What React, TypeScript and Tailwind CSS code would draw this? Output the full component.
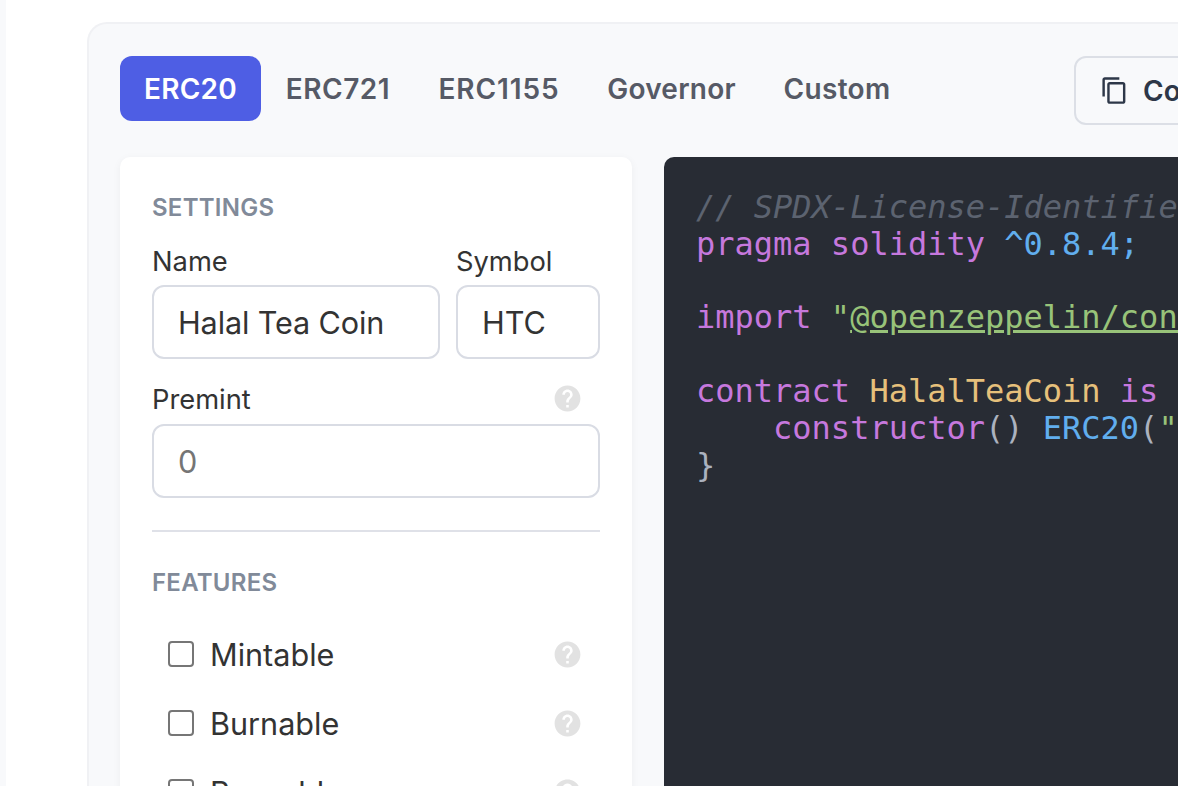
import React from "react";

const HELP = "M12 2C6.48 2 2 6.48 2 12s4.48 10 10 10 10-4.48 10-10S17.52 2 12 2zm1 17h-2v-2h2v2zm2.07-7.75l-.9.92C13.45 12.9 13 13.5 13 15h-2v-.5c0-1.1.45-2.1 1.17-2.83l1.24-1.26c.37-.36.59-.86.59-1.41 0-1.1-.9-2-2-2s-2 .9-2 2H8c0-2.21 1.79-4 4-4s4 1.79 4 4c0 .88-.36 1.68-.93 2.25z";
const COPY = "M16 1H4c-1.1 0-2 .9-2 2v14h2V3h12V1zm3 4H8c-1.1 0-2 .9-2 2v14c0 1.1.9 2 2 2h11c1.1 0 2-.9 2-2V7c0-1.1-.9-2-2-2zm0 16H8V7h11v14z";

function Help({ className = "" }: { className?: string }) {
  return (
    <svg viewBox="0 0 24 24" className={`mr-[0.75px] h-[31px] w-[31px] shrink-0 fill-[#e2e2e2] ${className}`}>
      <path d={HELP} />
    </svg>
  );
}

function Feature({ label }: { label: string }) {
  return (
    <div className="flex h-[69px] items-center pl-4 pr-4">
      <input
        type="checkbox"
        readOnly
        className="mb-[2px] h-[26px] w-[26px] shrink-0 appearance-none rounded-[4px] border-2 border-[#767676] bg-white"
      />
      <span className="ml-4 flex-1 text-[30.6px] leading-[40px] text-[#333333]">{label}</span>
      <Help />
    </div>
  );
}

const inputCls =
  "block h-[74px] w-full rounded-[12px] border-2 border-[#d9dce4] bg-white px-6 text-[30.6px] text-[#333333] placeholder:text-[#757575] outline-none";

const labelCls = "text-[27.3px] leading-[42px] text-[#333333]";
const headCls = "text-[24px] font-semibold leading-[36px] tracking-[0.25px] text-[#818a99]";

const tabs: [string, string][] = [
  ["ERC721", "w-[154px] tracking-[0.5px]"],
  ["ERC1155", "w-[168px] tracking-[0.9px]"],
  ["Governor", "w-[177px] tracking-[0.25px]"],
  ["Custom", "w-[154px] tracking-[0.35px]"],
];

export default function App() {
  return (
    <div className="flex h-[786px] w-[1178px] overflow-hidden bg-white font-['Inter',sans-serif]">
      <div className="h-full w-[6px] shrink-0 bg-[#f8f9fb]" />
      <div className="ml-[81px] mt-[22px] w-[1200px] shrink-0 rounded-t-[20px] border-2 border-b-0 border-[#f0f1f4] bg-[#f8f9fb] pl-[31px] pt-[32px]">
        <div className="flex h-[69px] items-start">
          <div className="flex h-[65px] w-[141px] shrink-0 items-center justify-center rounded-[12px] bg-[#4e5ee4] text-[28px] font-semibold tracking-[0.25px] text-white">
            ERC20
          </div>
          {tabs.map(([t, w]) => (
            <div key={t} className={`flex h-[65px] shrink-0 ${w} items-center justify-center text-[28px] font-semibold text-[#565a66]`}>
              {t}
            </div>
          ))}
          <div className="ml-[160px] flex h-[69px] shrink-0 items-center rounded-[12px] border-2 border-[#dcdfe6] pl-[24px] pr-6">
            <svg viewBox="0 0 24 24" className="h-[29px] w-[29px] shrink-0 fill-[#2d3748]">
              <path d={COPY} />
            </svg>
            <span className="ml-[14px] whitespace-nowrap text-[28px] font-semibold text-[#2d3748]">Copy to Clipboard</span>
          </div>
        </div>
        <div className="mt-8 flex items-start gap-8">
          <div className="h-[700px] w-[512px] shrink-0 rounded-[10px] bg-white px-8 pt-[33px] shadow-[0_2px_8px_rgba(0,0,0,0.05)]">
            <div className={headCls}>SETTINGS</div>
            <div className="mt-[15px] flex gap-4">
              <label className="block w-[288px]">
                <div className={`${labelCls} mb-[2px]`}>Name</div>
                <input className={`${inputCls} tracking-[-0.12px]`} readOnly value="Halal Tea Coin" />
              </label>
              <label className="block w-[144px]">
                <div className={`${labelCls} mb-[2px]`}>Symbol</div>
                <input className={inputCls} readOnly value="HTC" />
              </label>
            </div>
            <div className="mt-[18px] flex h-[44px] items-center justify-between pr-[16px]">
              <span className={`${labelCls} pt-[2px]`}>Premint</span>
              <Help className="mb-[2px]" />
            </div>
            <input className={`${inputCls} mt-[3px]`} readOnly placeholder="0" />
            <div className="mt-8 h-[2px] bg-[#dfe1e8]" />
            <div className={`mt-[33px] ${headCls}`}>FEATURES</div>
            <div className="mt-[19px]">
              <Feature label="Mintable" />
              <Feature label="Burnable" />
              <Feature label="Pausable" />
            </div>
          </div>
          <pre className="h-[700px] w-[600px] shrink-0 overflow-hidden rounded-[10px] bg-[#282c34] p-8 font-['DejaVu_Sans_Mono',monospace] text-[32px] leading-[36.8px] text-[#abb2bf]">
            <span className="italic text-[#5c6370]">// SPDX-License-Identifier: MIT</span>
            {"\n"}
            <span className="text-[#c678dd]">pragma solidity</span> <span className="text-[#61aeee]">^0.8.4;</span>
            {"\n\n"}
            <span className="text-[#c678dd]">import</span> <span className="text-[#98c379]">"<span className="underline">@openzeppelin/contracts/token/ERC20/ERC20.sol</span>";</span>
            {"\n\n"}
            <span className="text-[#c678dd]">contract</span> <span className="text-[#e6c07b]">HalalTeaCoin</span> <span className="text-[#c678dd]">is</span> <span className="text-[#e6c07b]">ERC20</span> {"{"}
            {"\n    "}
            <span className="text-[#c678dd]">constructor</span>() <span className="text-[#61aeee]">ERC20</span>(<span className="text-[#98c379]">"Halal Tea Coin"</span>, <span className="text-[#98c379]">"HTC"</span>) {"{}"}
            {"\n}"}
          </pre>
        </div>
      </div>
    </div>
  );
}
